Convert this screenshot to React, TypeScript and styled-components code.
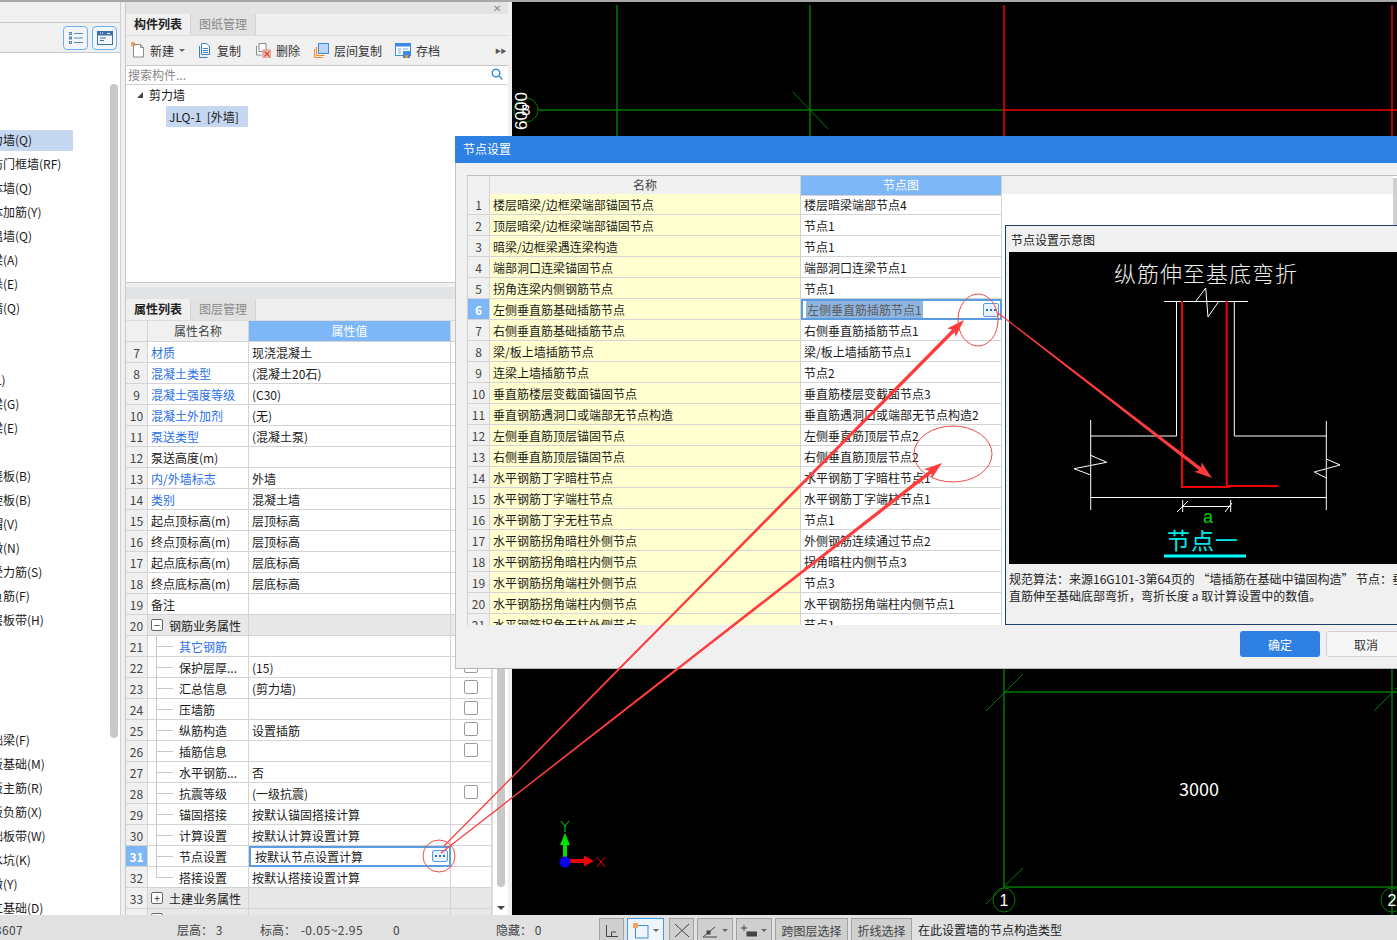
import React from "react";
import styled, { createGlobalStyle } from "styled-components";

const Global = createGlobalStyle`
  html, body { margin: 0; padding: 0; background: #f0f0f0; }
  body { font-family: "Noto Sans CJK SC", "Liberation Sans", sans-serif; font-size: 12px; color: #1a1a1a; }
  * { box-sizing: border-box; }
`;

const Page = styled.div`
  position: relative; width: 1397px; height: 940px; overflow: hidden;
  display: flex; flex-direction: column; background: #f0f0f0;
`;
const TopLine = styled.div`height: 2px; background: #a8a8a8; flex: none;`;
const Main = styled.div`flex: 1; display: flex; min-height: 0;`;

/* left sidebar */
const Sidebar = styled.aside`
  width: 121px; flex: none; display: flex; flex-direction: column; border-right: 1px solid #d0d0d0;
`;
const SideHead = styled.div`height: 21px; background: #f0f0f0; border-bottom: 1px solid #c8c8c8;`;
const SideTools = styled.div`
  height: 30px; background: #f0f0f0; border-bottom: 1px solid #c8c8c8;
  display: flex; align-items: center; justify-content: flex-end; gap: 4px; padding-right: 3px;
`;
const ToolToggle = styled.div`
  width: 25px; height: 24px; border: 1px solid #6db0ee; border-radius: 4px; background: #f2f6fb;
  display: flex; align-items: center; justify-content: center;
`;
const SideBody = styled.div`flex: 1; display: flex; background: #fff; min-height: 0;`;
const SideList = styled.div`flex: 1; overflow: hidden; padding-top: 77px;`;
const SideItem = styled.div`height: 24px; display: flex; align-items: flex-start; white-space: nowrap;`;
const SideLabel = styled.span<{ $on?: boolean }>`
  margin-left: -21px; flex: none; height: 21px; line-height: 20px;
  width: ${p => (p.$on ? "94px" : "auto")};
  background: ${p => (p.$on ? "#c6d8f1" : "transparent")};
`;
const SideTrack = styled.div`width: 10px; flex: none; padding-top: 31px;`;
const SideThumb = styled.div`width: 8px; height: 654px; background: #c8c8c8; border-radius: 4px;`;
const Gutter = styled.div`width: 4px; flex: none; background: #f0f0f0;`;

/* middle panel */
const Middle = styled.section`
  width: 383px; flex: none; display: flex; flex-direction: column; border-left: 1px solid #c8c8c8; background: #f0f0f0;
`;
const Strip = styled.div`
  height: 12px; flex: none; background: #e3e4e6; display: flex; align-items: center; justify-content: flex-end;
  padding-right: 7px; color: #888; font-size: 10px; line-height: 12px;
`;
const Tabs = styled.div`height: 22px; flex: none; display: flex; background: #efefef; border-bottom: 1px solid #dcdcdc;`;
const Tab = styled.div<{ $on?: boolean }>`
  width: 65px; display: flex; align-items: center; justify-content: center; padding-bottom: 2px;
  background: ${p => (p.$on ? "#f0f0f0" : "#e2e2e2")};
  color: ${p => (p.$on ? "#222" : "#8a8a8a")};
  font-weight: ${p => (p.$on ? 700 : 400)};
  border-right: 1px solid #d4d4d4;
`;
const ToolBar = styled.div`
  height: 30px; flex: none; display: flex; align-items: center; padding-left: 4px; padding-bottom: 1px;
  border-bottom: 1px solid #c8c8c8; position: relative; background: #f0f0f0;
`;
const ToolBtn = styled.div<{ $w: number }>`
  width: ${p => p.$w}px; flex: none; display: flex; align-items: center; gap: 5px; color: #333; white-space: nowrap;
`;
const More = styled.div`margin-left: auto; margin-right: 2px; color: #555; font-size: 6px; letter-spacing: -0.5px;`;
const Search = styled.div`
  height: 19px; flex: none; display: flex; align-items: center; justify-content: space-between;
  padding: 0 5px 2px 2px; background: #fff; border-bottom: 1px solid #d0d0d0; color: #888;
`;
const TreeBox = styled.div`
  height: 198px; flex: none; background: #fff; border-bottom: 1px solid #c8c8c8; padding-top: 0;
`;
const TreeRoot = styled.div`height: 21px; display: flex; align-items: center; padding: 0 0 2px 11px; gap: 6px;`;
const Caret = styled.span`
  width: 0; height: 0; border-left: 6px solid transparent; border-bottom: 6px solid #444;
`;
const TreeLeaf = styled.div`
  margin-left: 40px; width: 82px; height: 21px; background: #c6d8f1; line-height: 21px; padding-left: 3px; white-space: pre;
`;
const GapBar = styled.div`height: 4px; flex: none; background: #f0f0f0;`;

const PropWrap = styled.div`flex: 1; min-height: 0; display: flex; background: #fff;`;
const PropTable = styled.div`width: 366px; flex: none; overflow: hidden;`;
const PropRow = styled.div<{ $group?: boolean }>`
  display: grid; grid-template-columns: 22px 101px 202px 41px; height: 21px;
  background: ${p => (p.$group ? "#e8e8e8" : "#fff")};
`;
const Cell = styled.div`
  position: relative; border-right: 1px solid #d4d4d4; border-bottom: 1px solid #d4d4d4;
  display: flex; align-items: center; padding: 0 0 0 3px; white-space: nowrap; min-width: 0;
`;
const HeadCell = styled(Cell)<{ $on?: boolean }>`
  justify-content: center; padding: 0 0 2px;
  background: ${p => (p.$on ? "#7db7f7" : "#f0f0f0")};
  color: ${p => (p.$on ? "#fff" : "#444")};
`;
const Num = styled(Cell)<{ $on?: boolean }>`
  justify-content: center; padding-left: 0;
  background: ${p => (p.$on ? "#7db7f7" : "#f0f0f0")};
  color: ${p => (p.$on ? "#fff" : "#444")};
  font-weight: ${p => (p.$on ? 700 : 400)};
`;
const NameCell = styled(Cell)<{ $blue?: boolean; $child?: boolean; $last?: boolean }>`
  color: ${p => (p.$blue ? "#2a6fe8" : "#1a1a1a")};
  padding-left: ${p => (p.$child ? "31px" : "3px")};
  ${p => p.$child ? `
    &::before { content: ""; position: absolute; left: 8px; top: 0; width: 1px; height: ${p.$last ? "11px" : "21px"}; background: #c8c8c8; }
    &::after { content: ""; position: absolute; left: 9px; top: 10px; width: 16px; height: 1px; background: #c8c8c8; }
  ` : ""}
`;
const ActiveValue = styled(Cell)`
  border: 2px solid #5b9de1; padding-left: 4px;
`;
const EllipsisBtn = styled.span<{ $h: number }>`
  position: absolute; right: 1px; top: 2px; width: 16px; height: ${p => p.$h}px;
  border: 1px solid #5b9de1; border-radius: 2px; background: #eaf3fd;
  display: flex; align-items: center; justify-content: center;
`;
const CheckCell = styled(Cell)`justify-content: center; padding: 0;`;
const Check = styled.span`
  width: 14px; height: 14px; border: 1px solid #9a9a9a; border-radius: 2px; margin-bottom: 3px; background: #fff;
`;
const Expander = styled.span`
  width: 12px; height: 12px; border: 1px solid #666; border-radius: 2px; margin-right: 6px; flex: none; background: #fff;
  display: flex; align-items: center; justify-content: center; font-size: 11px; line-height: 10px; color: #333;
`;
const PropScroll = styled.div`
  width: 17px; flex: none; display: flex; flex-direction: column; align-items: center; padding-top: 300px; border-left: 1px solid #e0e0e0;
`;
const PropThumb = styled.div`width: 8px; height: 266px; background: #c8c8c8; border-radius: 4px;`;
const ScrollDown = styled.div`
  margin-top: 19px; width: 0; height: 0; border-left: 4px solid transparent; border-right: 4px solid transparent; border-top: 4px solid #444;
`;

const Canvas = styled.div`
  margin-left: 4px; flex: 1; min-width: 0; background: #000; display: flex;
`;
const Drawing = styled.svg`display: block; width: 100%; height: 100%;`;

/* status bar */
const Status = styled.footer`
  height: 25px; flex: none; background: #e1e1e1; display: flex; align-items: flex-end; color: #444; white-space: nowrap;
`;
const StatusCell = styled.div<{ $w: number }>`
  width: ${p => p.$w}px; flex: none; height: 25px; line-height: 29px; overflow: visible;
`;
const Clipped = styled.span`margin-left: -5px; display: inline-block; letter-spacing: 0.3px;`;
const Wide = styled.span`letter-spacing: 0.5px; margin-left: 2px;`;
const StatusBtn = styled.div<{ $w: number; $on?: boolean; $gap?: number }>`
  width: ${p => p.$w}px; flex: none; height: 22px; margin-right: ${p => p.$gap ?? 3}px;
  background: ${p => (p.$on ? "#eef5fd" : "#cfcfcf")};
  border: 1px solid ${p => (p.$on ? "#3f9bf2" : "#a2a2a2")}; border-bottom: none;
  display: flex; align-items: center; justify-content: center; gap: 4px; color: #444; padding-top: 2px;
`;
const StatusHint = styled.div`margin-left: 3px; height: 25px; line-height: 29px; color: #222;`;
const MiniCaret = styled.span`
  width: 0; height: 0; border-left: 3px solid transparent; border-right: 3px solid transparent; border-top: 3px solid #666;
`;

/* dialog */
const Dialog = styled.div`
  position: absolute; left: 455px; top: 136px; width: 960px; height: 533px; z-index: 5;
  background: #f0f0f0; border-left: 1px solid #c4c4c4; border-bottom: 1px solid #b8b8b8;
  display: flex; flex-direction: column;
`;
const DialogTitle = styled.div`
  height: 27px; flex: none; margin-left: -1px; background: #2e80e2; color: #fff; line-height: 26px; padding-left: 8px; font-size: 12px;
`;
const DialogBody = styled.div`
  height: 450px; flex: none; margin: 12px 0 0 11px; display: flex; overflow: hidden; border-top: 1px solid #c0c0c0;
`;
const NodeTable = styled.div`width: 535px; flex: none; border-left: 1px solid #d0d0d0;`;
const NodeRow = styled.div<{ $head?: boolean }>`
  display: grid; grid-template-columns: 22px 311px 201px;
  height: ${p => (p.$head ? "18px" : "21px")};
  background: #fff;
`;
const NodeName = styled(Cell)`background: #ffffcf;`;
const NodeActive = styled(Cell)`border: 2px solid #5b9de1; padding-left: 3px;`;
const Selected = styled.span`background: #90b4e0; color: #5a5a5a; padding: 0 1px; line-height: 17px;`;
const RightCol = styled.div`flex: 1; display: flex; flex-direction: column; background: #fff; min-width: 0;`;
const RightTop = styled.div`height: 49px; flex: none; display: flex;`;
const RightTopMain = styled.div`width: 391px; flex: none; display: flex; flex-direction: column;`;
const RightHead = styled.div`height: 18px; flex: none; background: #f0f0f0;`;
const RightBlank = styled.div`flex: 1; background: #fff;`;
const RightScroll = styled.div`flex: 1; background: #d0d0d0; margin-top: 2px;`;
const Preview = styled.div`
  flex: 1; margin-left: 3px; background: #f0f0f0; border: 1px solid #1f3d6d; border-right: none;
  padding-left: 3px; display: flex; flex-direction: column; min-height: 0; overflow: hidden;
`;
const PreviewTitle = styled.div`height: 26px; flex: none; line-height: 28px; padding-left: 2px; color: #222;`;
const PreviewPic = styled.svg`display: block; width: 388px; height: 312px; flex: none; background: #000;`;
const PreviewNote = styled.p`
  margin: 6px 0 0; width: 392px; line-height: 17px; white-space: pre; color: #222; font-size: 12px;
`;
const DialogFoot = styled.div`flex: 1; display: flex; align-items: flex-start; padding: 6px 0 0 784px; gap: 6px;`;
const Primary = styled.button`
  width: 80px; height: 26px; border: none; border-radius: 3px; background: #2e80e2; color: #fff; font: inherit; font-size: 12px;
`;
const Secondary = styled.button`
  width: 80px; height: 26px; border: 1px solid #d0d0d0; border-radius: 3px; background: #f6f6f6; color: #333; font: inherit; font-size: 12px;
`;

const Overlay = styled.svg`
  position: absolute; left: 0; top: 0; width: 1397px; height: 940px; z-index: 10; pointer-events: none;
`;

const sideItems: (string | null)[] = [
  "剪力墙(Q)", "人防门框墙(RF)", "砌体墙(Q)", "砌体加筋(Y)", "保温墙(Q)", "暗梁(A)", "墙垛(E)", "幕墙(Q)", null, null,
  "梁(L)", "连梁(G)", "圈梁(E)", null, "现浇板(B)", "螺旋板(B)", "柱帽(V)", "柱墩(N)", "板受力筋(S)", "板负筋(F)", "楼层板带(H)",
  null, null, null, null, "基础梁(F)", "筏板基础(M)", "筏板主筋(R)", "筏板负筋(X)", "基础板带(W)", "集水坑(K)", "柱墩(Y)", "独立基础(D)",
];

type P = { n: number; name: string; val?: string; blue?: boolean; child?: boolean; check?: boolean; group?: string; last?: boolean; active?: boolean };
const props: P[] = [
  { n: 7, name: "材质", val: "现浇混凝土", blue: true },
  { n: 8, name: "混凝土类型", val: "(混凝土20石)", blue: true },
  { n: 9, name: "混凝土强度等级", val: "(C30)", blue: true },
  { n: 10, name: "混凝土外加剂", val: "(无)", blue: true },
  { n: 11, name: "泵送类型", val: "(混凝土泵)", blue: true },
  { n: 12, name: "泵送高度(m)" },
  { n: 13, name: "内/外墙标志", val: "外墙", blue: true },
  { n: 14, name: "类别", val: "混凝土墙", blue: true },
  { n: 15, name: "起点顶标高(m)", val: "层顶标高" },
  { n: 16, name: "终点顶标高(m)", val: "层顶标高" },
  { n: 17, name: "起点底标高(m)", val: "层底标高" },
  { n: 18, name: "终点底标高(m)", val: "层底标高" },
  { n: 19, name: "备注" },
  { n: 20, name: "钢筋业务属性", group: "−" },
  { n: 21, name: "其它钢筋", blue: true, child: true },
  { n: 22, name: "保护层厚...", val: "(15)", child: true, check: true },
  { n: 23, name: "汇总信息", val: "(剪力墙)", child: true, check: true },
  { n: 24, name: "压墙筋", child: true, check: true },
  { n: 25, name: "纵筋构造", val: "设置插筋", child: true, check: true },
  { n: 26, name: "插筋信息", child: true, check: true },
  { n: 27, name: "水平钢筋...", val: "否", child: true },
  { n: 28, name: "抗震等级", val: "(一级抗震)", child: true, check: true },
  { n: 29, name: "锚固搭接", val: "按默认锚固搭接计算", child: true },
  { n: 30, name: "计算设置", val: "按默认计算设置计算", child: true },
  { n: 31, name: "节点设置", val: "按默认节点设置计算", child: true, active: true },
  { n: 32, name: "搭接设置", val: "按默认搭接设置计算", child: true, last: true },
  { n: 33, name: "土建业务属性", group: "+" },
  { n: 34, name: "", group: "+" },
];

const nodes: [string, string][] = [
  ["楼层暗梁/边框梁端部锚固节点", "楼层暗梁端部节点4"],
  ["顶层暗梁/边框梁端部锚固节点", "节点1"],
  ["暗梁/边框梁遇连梁构造", "节点1"],
  ["端部洞口连梁锚固节点", "端部洞口连梁节点1"],
  ["拐角连梁内侧钢筋节点", "节点1"],
  ["左侧垂直筋基础插筋节点", "左侧垂直筋插筋节点1"],
  ["右侧垂直筋基础插筋节点", "右侧垂直筋插筋节点1"],
  ["梁/板上墙插筋节点", "梁/板上墙插筋节点1"],
  ["连梁上墙插筋节点", "节点2"],
  ["垂直筋楼层变截面锚固节点", "垂直筋楼层变截面节点3"],
  ["垂直钢筋遇洞口或端部无节点构造", "垂直筋遇洞口或端部无节点构造2"],
  ["左侧垂直筋顶层锚固节点", "左侧垂直筋顶层节点2"],
  ["右侧垂直筋顶层锚固节点", "右侧垂直筋顶层节点2"],
  ["水平钢筋丁字暗柱节点", "水平钢筋丁字暗柱节点1"],
  ["水平钢筋丁字端柱节点", "水平钢筋丁字端柱节点1"],
  ["水平钢筋丁字无柱节点", "节点1"],
  ["水平钢筋拐角暗柱外侧节点", "外侧钢筋连续通过节点2"],
  ["水平钢筋拐角暗柱内侧节点", "拐角暗柱内侧节点3"],
  ["水平钢筋拐角端柱外侧节点", "节点3"],
  ["水平钢筋拐角端柱内侧节点", "水平钢筋拐角端柱内侧节点1"],
  ["水平钢筋拐角无柱外侧节点", "节点1"],
];

const arrowPoints = (x1: number, y1: number, x2: number, y2: number) => {
  const d = Math.hypot(x2 - x1, y2 - y1);
  const ux = (x2 - x1) / d, uy = (y2 - y1) / d;
  const nx = -uy, ny = ux;
  const hx = x2 - ux * 15, hy = y2 - uy * 15;
  const p = (x: number, y: number, w: number) => `${(x + nx * w).toFixed(1)},${(y + ny * w).toFixed(1)}`;
  return [p(x1, y1, 0.5), p(hx, hy, 1.8), p(hx - ux * 3, hy - uy * 3, 6), `${x2},${y2}`, p(hx - ux * 3, hy - uy * 3, -6), p(hx, hy, -1.8), p(x1, y1, -0.5)].join(" ");
};

const Dots = () => (
  <svg width="10" height="2" viewBox="0 0 10 2" fill="#2a6fc8">
    <rect x="0" y="0" width="2" height="2" />
    <rect x="4" y="0" width="2" height="2" />
    <rect x="8" y="0" width="2" height="2" />
  </svg>
);
const IconNew = () => (
  <svg width="15" height="16" viewBox="0 0 15 16">
    <path d="M3.5 2.5h7l3 3v9.5h-10z" fill="#fff" stroke="#8a8a8a" />
    <path d="M10.5 2.5v3h3" fill="none" stroke="#8a8a8a" />
    <path d="M1 1h4M3 0v5M1 3.5l4-2M1 1.5l4 2" stroke="#f08a24" strokeWidth="1" />
  </svg>
);
const IconCopy = () => (
  <svg width="13" height="15" viewBox="0 0 13 15">
    <path d="M2.5 0.5h5l3 3v8h-8z" fill="#fff" stroke="#3d7fc4" />
    <path d="M0.5 3v11.5h8" fill="none" stroke="#3d7fc4" />
    <path d="M4 5.5h5M4 7.5h5M4 9.5h5" stroke="#3d7fc4" />
  </svg>
);
const IconDel = () => (
  <svg width="15" height="15" viewBox="0 0 15 15">
    <path d="M3 .5h7v8h-7zM.5 3v9h5" fill="#fff" stroke="#8a8a8a" />
    <rect x="7" y="7" width="8" height="8" fill="#f2c6c0" stroke="#d8604e" strokeWidth=".6" />
    <path d="M8.5 8.5l5 5M13.5 8.5l-5 5" stroke="#d8402e" strokeWidth="1.2" />
  </svg>
);
const IconFloor = () => (
  <svg width="15" height="15" viewBox="0 0 15 15">
    <rect x="4.5" y="0.5" width="10" height="10" fill="#bcd8f8" stroke="#3d8ae0" />
    <path d="M2.5 4v8.5h8M.5 6v8.5h8" fill="none" stroke="#f08a24" />
  </svg>
);
const IconSave = () => (
  <svg width="16" height="15" viewBox="0 0 16 15">
    <rect x=".5" y=".5" width="15" height="12" fill="#fff" stroke="#3d8ae0" />
    <rect x=".5" y=".5" width="15" height="3" fill="#3d8ae0" />
    <path d="M3 6h3M3 8h3M3 10h3M8 6h5" stroke="#7aa9dc" />
    <rect x="8" y="8" width="7" height="7" fill="#3d8ae0" />
    <rect x="10" y="12" width="3" height="3" fill="#f08a24" />
  </svg>
);

const STATUS_ICON_STROKE = "#444";

export default function App() {
  return (
    <Page>
      <Global />
      <TopLine />
      <Main>
        <Sidebar>
          <SideHead />
          <SideTools>
            <ToolToggle>
              <svg width="14" height="14" viewBox="0 0 14 14" fill="none" stroke="#5a87b8">
                <rect x="0.5" y="1.5" width="2" height="2" />
                <rect x="0.5" y="6" width="2" height="2" />
                <rect x="0.5" y="10.5" width="2" height="2" />
                <path d="M5 2.5h9M5 7h9M5 11.5h9" />
              </svg>
            </ToolToggle>
            <ToolToggle>
              <svg width="16" height="14" viewBox="0 0 16 14" fill="none">
                <rect x="0.5" y="0.5" width="15" height="13" stroke="#3d6fa8" />
                <rect x="1" y="1" width="14" height="3.5" fill="#3d6fa8" />
                <path d="M3 7h6M3 9.5h4" stroke="#3d6fa8" />
                <path d="M10 2.5h3M3 2h1M5 2h1" stroke="#fff" />
              </svg>
            </ToolToggle>
          </SideTools>
          <SideBody>
            <SideList>
              {sideItems.map((t, i) => (
                <SideItem key={i}>{t && <SideLabel $on={i === 0}>{t}</SideLabel>}</SideItem>
              ))}
            </SideList>
            <SideTrack><SideThumb /></SideTrack>
          </SideBody>
        </Sidebar>
        <Gutter />
        <Middle>
          <Strip>✕</Strip>
          <Tabs>
            <Tab $on>构件列表</Tab>
            <Tab>图纸管理</Tab>
          </Tabs>
          <ToolBar>
            <ToolBtn $w={69}><IconNew />新建 <MiniCaret /></ToolBtn>
            <ToolBtn $w={57}><IconCopy />复制</ToolBtn>
            <ToolBtn $w={58}><IconDel />删除</ToolBtn>
            <ToolBtn $w={81}><IconFloor />层间复制</ToolBtn>
            <ToolBtn $w={60}><IconSave />存档</ToolBtn>
            <More>▶▶</More>
          </ToolBar>
          <Search>
            搜索构件...
            <svg width="12" height="12" viewBox="0 0 12 12" fill="none" stroke="#2f8fd8" strokeWidth="1.4">
              <circle cx="5" cy="5" r="3.8" />
              <path d="M8 8l3.4 3.4" />
            </svg>
          </Search>
          <TreeBox>
            <TreeRoot><Caret />剪力墙</TreeRoot>
            <TreeLeaf>JLQ-1  [外墙]</TreeLeaf>
          </TreeBox>
          <GapBar />
          <Strip />
          <Tabs>
            <Tab $on>属性列表</Tab>
            <Tab>图层管理</Tab>
          </Tabs>
          <PropWrap>
            <PropTable>
              <PropRow>
                <HeadCell />
                <HeadCell>属性名称</HeadCell>
                <HeadCell $on>属性值</HeadCell>
                <HeadCell />
              </PropRow>
              {props.map(p => (
                <PropRow key={p.n} $group={!!p.group}>
                  <Num $on={p.active}>{p.n}</Num>
                  <NameCell $blue={p.blue} $child={p.child} $last={p.last}>
                    {p.group && <Expander>{p.group}</Expander>}
                    {p.name}
                  </NameCell>
                  {p.active ? (
                    <ActiveValue>{p.val}<EllipsisBtn $h={12}><Dots /></EllipsisBtn></ActiveValue>
                  ) : (
                    <Cell>{p.val}</Cell>
                  )}
                  <CheckCell>{p.check && <Check />}</CheckCell>
                </PropRow>
              ))}
            </PropTable>
            <PropScroll>
              <PropThumb />
              <ScrollDown />
            </PropScroll>
          </PropWrap>
        </Middle>
        <Canvas>
          <Drawing viewBox="512 2 885 913" preserveAspectRatio="none">
            <g stroke="#007a00" strokeWidth="1.5" fill="none">
              <path d="M617 5V140M810 5V140M538 110H1004" />
              <path d="M793 92L828 129" strokeWidth="1" />
              <circle cx="526" cy="110" r="12" strokeWidth="1" />
              <path d="M1004 660V887M1392 660V915M1004 692H1397M1004 887H1397" />
              <path d="M986 711L1023 674M1374 711L1397 688M986 904L1023 868" strokeWidth="1" />
              <ellipse cx="1004" cy="900" rx="11" ry="12" strokeWidth="1" />
              <ellipse cx="1392" cy="900" rx="11" ry="12" strokeWidth="1" />
            </g>
            <g stroke="#f00000" strokeWidth="1.5" fill="none">
              <path d="M1004 5V140M1392 5V140M1004 110H1397" />
            </g>
            <g fill="#fff" fontFamily="'Liberation Sans', sans-serif">
              <text x="527" y="111" fontSize="17" textAnchor="middle" transform="rotate(-90 527 111)">6000</text>
              <text x="526" y="115" fontSize="14" textAnchor="middle">B</text>
              <text x="1199" y="796" fontSize="18" textAnchor="middle" fontFamily="'Noto Sans CJK SC', sans-serif">3000</text>
              <text x="1004" y="906" fontSize="16" textAnchor="middle">1</text>
              <text x="1392" y="906" fontSize="16" textAnchor="middle">2</text>
            </g>
            <path d="M565 858V843" stroke="#00e000" strokeWidth="4" />
            <path d="M565 833L570 845H560Z" fill="#00e000" />
            <path d="M561 821L565 826L569 821M565 826V832" stroke="#00e000" fill="none" />
            <path d="M568 861H585" stroke="#f00000" strokeWidth="4" />
            <path d="M594 861L584 855.5V866.5Z" fill="#f00000" />
            <ellipse cx="565" cy="862" rx="5.5" ry="5.5" fill="#0000f0" />
            <path d="M597 857L605 867M605 857L597 867" stroke="#f00000" fill="none" />
          </Drawing>
        </Canvas>
      </Main>
      <Status>
        <StatusCell $w={177}><Clipped>3607</Clipped></StatusCell>
        <StatusCell $w={83}>层高：&nbsp;3</StatusCell>
        <StatusCell $w={133}>标高：&nbsp;<Wide>-0.05~2.95</Wide></StatusCell>
        <StatusCell $w={103}>0</StatusCell>
        <StatusCell $w={103}>隐藏：&nbsp;0</StatusCell>
        <StatusBtn $w={25}>
          <svg width="14" height="14" viewBox="0 0 14 14" fill="none" stroke={STATUS_ICON_STROKE}>
            <path d="M1.5 1v11.5H13M6.5 12.5V8H11" />
          </svg>
        </StatusBtn>
        <StatusBtn $w={37} $on $gap={5}>
          <svg width="16" height="16" viewBox="0 0 16 16" fill="none">
            <rect x="2.5" y="2.5" width="12.5" height="12.5" stroke="#3f8fe0" />
            <rect x="0" y="0" width="5" height="5" fill="#f2a35e" />
          </svg>
          <MiniCaret />
        </StatusBtn>
        <StatusBtn $w={25}>
          <svg width="16" height="15" viewBox="0 0 16 15" fill="none" stroke={STATUS_ICON_STROKE}>
            <path d="M1 1l14 13M15 1L1 14" />
          </svg>
        </StatusBtn>
        <StatusBtn $w={36}>
          <svg width="16" height="14" viewBox="0 0 16 14" fill="none" stroke={STATUS_ICON_STROKE}>
            <path d="M1 13H15M1 13L13 3" />
            <rect x="5" y="7" width="3" height="3" fill="#444" />
          </svg>
          <MiniCaret />
        </StatusBtn>
        <StatusBtn $w={36}>
          <svg width="16" height="14" viewBox="0 0 16 14" fill="none" stroke={STATUS_ICON_STROKE}>
            <path d="M3 1v6M0 4h6" />
            <rect x="6" y="8" width="10" height="4" fill="#444" />
          </svg>
          <MiniCaret />
        </StatusBtn>
        <StatusBtn $w={73}>跨图层选择</StatusBtn>
        <StatusBtn $w={61}>折线选择</StatusBtn>
        <StatusHint>在此设置墙的节点构造类型</StatusHint>
      </Status>

      <Dialog>
        <DialogTitle>节点设置</DialogTitle>
        <DialogBody>
          <NodeTable>
            <NodeRow $head>
              <HeadCell />
              <HeadCell>名称</HeadCell>
              <HeadCell $on>节点图</HeadCell>
            </NodeRow>
            {nodes.map(([a, b], i) => (
              <NodeRow key={i}>
                <Num $on={i === 5}>{i + 1}</Num>
                <NodeName>{a}</NodeName>
                {i === 5 ? (
                  <NodeActive><Selected>{b}</Selected><EllipsisBtn $h={14}><Dots /></EllipsisBtn></NodeActive>
                ) : (
                  <Cell>{b}</Cell>
                )}
              </NodeRow>
            ))}
          </NodeTable>
          <RightCol>
            <RightTop>
              <RightTopMain>
                <RightHead />
                <RightBlank />
              </RightTopMain>
              <RightScroll />
            </RightTop>
            <Preview>
              <PreviewTitle>节点设置示意图</PreviewTitle>
              <PreviewPic viewBox="1009 252 388 312">
                <text x="1206" y="282" fill="#eee" fontSize="22" letterSpacing="1" textAnchor="middle" fontWeight="300" fontFamily="'Noto Sans CJK SC', sans-serif">纵筋伸至基底弯折</text>
                <g stroke="#fff" fill="none" strokeWidth="1">
                  <path d="M1164 301.5H1248M1196 301L1205.7 288L1208 317L1219 301" />
                  <path d="M1176.5 301V436H1090.7M1234.3 301V436H1326.3" />
                  <path d="M1090.7 420V510M1326.3 421V510M1090.7 497.5H1326.3" />
                  <path d="M1090.7 455.3L1106.7 462.3L1074 468.7L1090.7 475M1326.3 459L1340 465L1314.3 472L1326.3 478" />
                  <path d="M1182.7 506.5H1230.7M1182.7 500V512M1230.7 500V512M1177 512L1188 501M1225 512L1232 503" />
                </g>
                <g stroke="#f00000" fill="none" strokeWidth="2">
                  <path d="M1182 301V487H1230M1226.7 301V486H1278" />
                </g>
                <text x="1208" y="523" fill="#00d000" fontSize="18" textAnchor="middle" fontFamily="'Liberation Sans', sans-serif">a</text>
                <text x="1203" y="549" fill="#00e8e8" fontSize="23" letterSpacing="1" textAnchor="middle" fontFamily="'Noto Sans CJK SC', sans-serif">节点一</text>
                <path d="M1164 556H1246" stroke="#00ffff" strokeWidth="3" />
              </PreviewPic>
              <PreviewNote>{"规范算法：来源16G101-3第64页的 “墙插筋在基础中锚固构造” 节点：垂\n直筋伸至基础底部弯折，弯折长度 a 取计算设置中的数值。"}</PreviewNote>
            </Preview>
          </RightCol>
        </DialogBody>
        <DialogFoot>
          <Primary>确定</Primary>
          <Secondary>取消</Secondary>
        </DialogFoot>
      </Dialog>

      <Overlay viewBox="0 0 1397 940">
        <g fill="#ff3c3c">
          <polygon points={arrowPoints(444, 846, 964, 320)} />
          <polygon points={arrowPoints(441, 853, 942, 463)} />
          <polygon points={arrowPoints(998, 313, 1212, 478)} />
        </g>
        <g fill="none" stroke="#f04a4a" strokeWidth="1">
          <ellipse cx="439" cy="856" rx="16" ry="16" />
          <ellipse cx="978" cy="320" rx="20" ry="26" />
          <ellipse cx="953" cy="454" rx="39" ry="28" />
        </g>
      </Overlay>
    </Page>
  );
}
